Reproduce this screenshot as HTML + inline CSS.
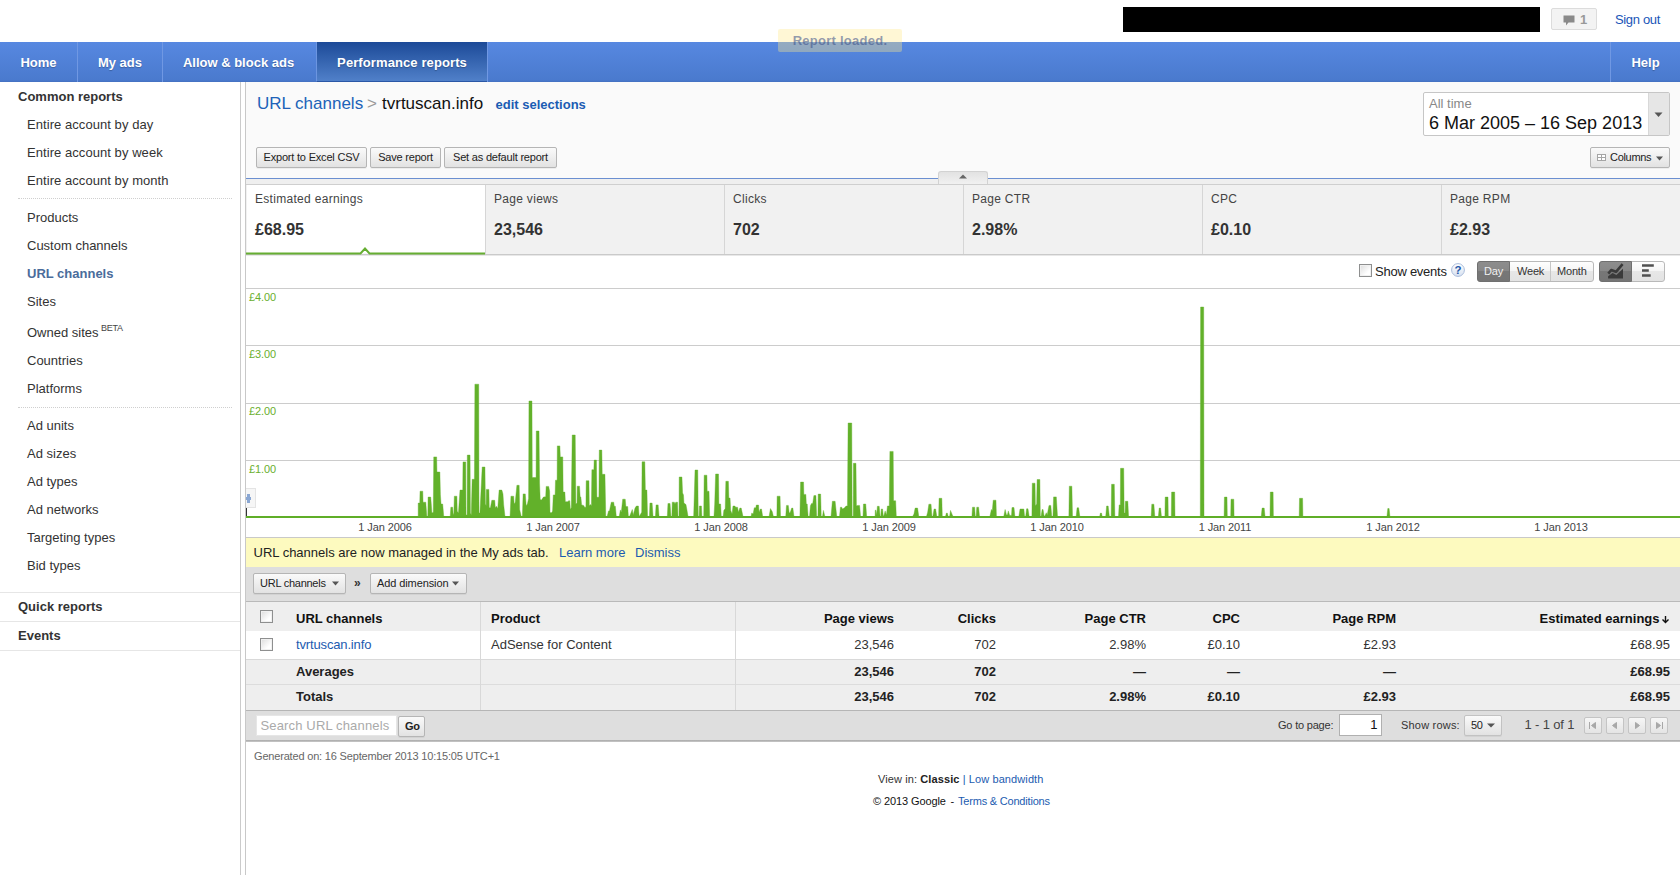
<!DOCTYPE html>
<html><head><meta charset="utf-8"><title>Performance reports</title>
<style>
*{box-sizing:border-box;margin:0;padding:0}
html,body{width:1680px;height:875px;overflow:hidden;background:#fff}
body{font-family:"Liberation Sans",Arial,sans-serif;font-size:13px;color:#333;position:relative}
a{color:#1c5bb0;text-decoration:none}
.a{position:absolute;white-space:nowrap}
/* baseline-positioned text: top = baseline - 0.905*fs (line-height normal ~1.149) */
#blackbar{left:1123px;top:7px;width:417px;height:25px;background:#000}
#msg{left:1551px;top:8px;width:46px;height:22px;background:#f3f3f3;border:1px solid #dcdcdc;border-radius:2px}
#nav{left:0;top:42px;width:1680px;height:40px;background:linear-gradient(#5788e1,#4a7ace 95%,#4470c0)}
.tab{position:absolute;top:0;height:40px;line-height:41px;color:#fff;font-weight:bold;font-size:13px;text-align:center;text-shadow:0 1px 1px rgba(0,0,0,.25)}
.vd{position:absolute;top:0;width:1px;height:40px;background:#7098e3}
#acttab{background:linear-gradient(#1c4a98,#5080c9);border-left:1px solid #6c95e0;border-bottom:1px solid #2a57a6;letter-spacing:.1px}
#toast{left:778px;top:29px;width:124px;height:23px;background:rgba(255,232,138,.36);border-radius:2px;color:rgba(55,75,135,.55);font-weight:bold;font-size:13px;letter-spacing:.25px;text-align:center;line-height:23px}
#sideb1{left:240px;top:82px;width:1px;height:793px;background:#cbcbcb}
#sideb2{left:245px;top:82px;width:1px;height:793px;background:#c8c8c8}
#sidegap{left:241px;top:82px;width:4px;height:793px;background:#fff}
.sh{left:18px;font-weight:bold;font-size:13px;color:#333;line-height:15px}
.si{left:27px;font-size:13px;color:#333;line-height:15px}
.sdot{left:18px;width:214px;height:0;border-top:1px dotted #cfcfcf}
.sline{left:0;width:240px;height:1px;background:#e6e6e6}
#hdr{left:246px;top:82px;width:1434px;height:96px;background:#fafafa}
.btn{height:21px;border:1px solid #b5b5b5;border-radius:2px;background:linear-gradient(#fafafa,#e2e2e2);font-size:11px;color:#222;line-height:19px;text-align:center;box-shadow:0 1px 0 rgba(0,0,0,.05)}
.mc{top:185px;height:69px;width:239px;background:#f1f1f1;border-left:1px solid #d4d4d4}
.ml{font-size:12px;color:#444;line-height:14px;letter-spacing:.3px}
.mv{font-size:16px;font-weight:bold;color:#333;line-height:18px}
.gl{left:246px;width:1434px;height:1px;background:#ccc}
.yl{left:249px;font-size:11px;color:#6aaf2e;line-height:13px;letter-spacing:-.1px}
.xl{font-size:11px;color:#444;line-height:13px;width:80px;text-align:center;letter-spacing:-.1px}
.th{font-size:13px;font-weight:bold;color:#111;line-height:15px}
.td{font-size:13px;color:#333;line-height:15px}
.r{text-align:right}
.cb{width:13px;height:13px;border:1px solid #8e8f8f;background:linear-gradient(135deg,#dcdcdc,#fff 70%);box-shadow:inset 0 0 0 1px #f0f0f0}
.pg{top:717px;width:18px;height:17px;border:1px solid #c4c4c4;border-radius:2px;background:linear-gradient(#f6f6f6,#e4e4e4)}
</style></head><body>
<div class="a" id="blackbar"></div>
<div class="a" id="msg"><svg class="a" style="left:11px;top:6px" width="12" height="11" viewBox="0 0 12 11"><path d="M0.5,0.5h11v7h-6l-2.5,3v-3h-2.5z" fill="#8a8a8a"/></svg></div>
<div class="a " style="left:1580px;top:12.2px;font-size:13px;line-height:15px;color:#999;font-weight:bold">1</div>
<a class="a " style="left:1615px;top:12.2px;font-size:13px;line-height:15px;color:#1a55b8;letter-spacing:-.35px">Sign out</a>
<div class="a" id="nav">
<div class="tab" style="left:0;width:77px">Home</div><div class="vd" style="left:77px"></div>
<div class="tab" style="left:78px;width:84px">My ads</div><div class="vd" style="left:162px"></div>
<div class="tab" style="left:162px;width:153px">Allow &amp; block ads</div>
<div class="tab" id="acttab" style="left:316px;width:171px">Performance reports</div>
<div class="vd" style="left:487px"></div>
<div class="vd" style="left:1610px"></div><div class="tab" style="left:1611px;width:69px">Help</div>
</div>
<div class="a" id="toast">Report loaded.</div>
<div class="a" id="sideb1"></div><div class="a" id="sidegap"></div><div class="a" id="sideb2"></div>
<div class="a sh" style="left:18px;top:89.2px;font-size:13px;line-height:15px;">Common reports</div>
<div class="a si" style="left:27px;top:117.2px;font-size:13px;line-height:15px;letter-spacing:.06px">Entire account by day</div>
<div class="a si" style="left:27px;top:145.2px;font-size:13px;line-height:15px;letter-spacing:.06px">Entire account by week</div>
<div class="a si" style="left:27px;top:173.2px;font-size:13px;line-height:15px;letter-spacing:.06px">Entire account by month</div>
<div class="a sdot" style="top:198px"></div>
<div class="a si" style="left:27px;top:210.2px;font-size:13px;line-height:15px;">Products</div>
<div class="a si" style="left:27px;top:238.2px;font-size:13px;line-height:15px;">Custom channels</div>
<div class="a si" style="left:27px;top:266.2px;font-size:13px;line-height:15px;font-weight:bold;color:#4a6c9b;letter-spacing:0">URL channels</div>
<div class="a si" style="left:27px;top:294.2px;font-size:13px;line-height:15px;">Sites</div>
<div class="a si" style="left:27px;top:325.2px;font-size:13px;line-height:15px;">Owned sites</div>
<div class="a " style="left:101px;top:322.5px;font-size:9px;line-height:11px;color:#444;letter-spacing:-.3px">BETA</div>
<div class="a si" style="left:27px;top:353.2px;font-size:13px;line-height:15px;">Countries</div>
<div class="a si" style="left:27px;top:381.2px;font-size:13px;line-height:15px;">Platforms</div>
<div class="a sdot" style="top:407px"></div>
<div class="a si" style="left:27px;top:418.2px;font-size:13px;line-height:15px;">Ad units</div>
<div class="a si" style="left:27px;top:446.2px;font-size:13px;line-height:15px;">Ad sizes</div>
<div class="a si" style="left:27px;top:474.2px;font-size:13px;line-height:15px;">Ad types</div>
<div class="a si" style="left:27px;top:502.2px;font-size:13px;line-height:15px;">Ad networks</div>
<div class="a si" style="left:27px;top:530.2px;font-size:13px;line-height:15px;">Targeting types</div>
<div class="a si" style="left:27px;top:558.2px;font-size:13px;line-height:15px;">Bid types</div>
<div class="a sline" style="top:592px"></div>
<div class="a sh" style="left:18px;top:599.2px;font-size:13px;line-height:15px;">Quick reports</div>
<div class="a sline" style="top:621px"></div>
<div class="a sh" style="left:18px;top:628.2px;font-size:13px;line-height:15px;">Events</div>
<div class="a sline" style="top:650px"></div>
<div class="a" id="hdr"></div>
<a class="a " style="left:257px;top:93.9px;font-size:17px;line-height:19px;color:#2062b8">URL channels</a>
<div class="a " style="left:367px;top:93.9px;font-size:17px;line-height:19px;color:#999">&gt;</div>
<div class="a " style="left:382px;top:93.9px;font-size:17px;line-height:19px;color:#111">tvrtuscan.info</div>
<a class="a " style="left:495.5px;top:97.2px;font-size:13px;line-height:15px;color:#1a5cb3;font-weight:bold">edit selections</a>
<div class="a btn" style="left:256px;top:147px;width:111px;letter-spacing:-.2px">Export to Excel CSV</div>
<div class="a btn" style="left:370px;top:147px;width:71px;letter-spacing:-.2px">Save report</div>
<div class="a btn" style="left:444px;top:147px;width:113px;letter-spacing:-.2px">Set as default report</div>
<div class="a" style="left:1423px;top:92px;width:247px;height:44px;background:#fff;border:1px solid #c6c6c6;border-radius:2px"></div>
<div class="a" style="left:1648px;top:93px;width:21px;height:42px;background:#e6e6e6;border-left:1px solid #d8d8d8"></div>
<svg class="a" style="left:1654px;top:112px" width="9" height="6"><path d="M0.5,0.5h8l-4,4.5z" fill="#555"/></svg>
<div class="a " style="left:1429px;top:96.2px;font-size:13px;line-height:15px;color:#888">All time</div>
<div class="a " style="left:1429px;top:113.1px;font-size:18px;line-height:20px;color:#111">6 Mar 2005 – 16 Sep 2013</div>
<div class="a btn" style="left:1590px;top:147px;width:80px"></div>
<svg class="a" style="left:1597px;top:154px" width="10" height="7"><rect x=".5" y=".5" width="8" height="6" fill="#fff" stroke="#a5a5a5"/><path d="M.5,3.5h8M4.5,.5v6" stroke="#a5a5a5"/></svg>
<div class="a " style="left:1610px;top:150.9px;font-size:11px;line-height:13px;color:#222;letter-spacing:-.3px">Columns</div>
<svg class="a" style="left:1656px;top:156px" width="8" height="5"><path d="M0,0.5h7l-3.5,4z" fill="#555"/></svg>
<div class="a" style="left:246px;top:178px;width:1434px;height:1px;background:#6b8fd1"></div>
<div class="a" style="left:246px;top:179px;width:1434px;height:5px;background:#efefef"></div>
<div class="a" style="left:246px;top:184px;width:1434px;height:1px;background:#cfcfcf"></div>
<div class="a" style="left:938px;top:171px;width:50px;height:13px;background:linear-gradient(#e2e2e2,#f1f1f1);border:1px solid #d2d2d2;border-bottom:0;border-radius:3px 3px 0 0"></div>
<svg class="a" style="left:959px;top:174px" width="9" height="5"><path d="M0,4.5h8l-4,-4z" fill="#666"/></svg>
<div class="a" style="left:246px;top:185px;width:1434px;height:69px;background:#f1f1f1"></div>
<div class="a" style="left:246px;top:254px;width:1434px;height:1px;background:#cacaca"></div>
<div class="a" style="left:246px;top:255px;width:1434px;height:1px;background:#e8e8e8"></div>
<div class="a" style="left:247px;top:185px;width:238px;height:68px;background:#fff"></div>
<div class="a" style="left:485px;top:185px;width:1px;height:69px;background:#d6d6d6"></div>
<div class="a" style="left:724px;top:185px;width:1px;height:69px;background:#d6d6d6"></div>
<div class="a" style="left:963px;top:185px;width:1px;height:69px;background:#d6d6d6"></div>
<div class="a" style="left:1202px;top:185px;width:1px;height:69px;background:#d6d6d6"></div>
<div class="a" style="left:1441px;top:185px;width:1px;height:69px;background:#d6d6d6"></div>
<div class="a ml" style="left:255px;top:192.0px;font-size:12px;line-height:14px;">Estimated earnings</div>
<div class="a mv" style="left:255px;top:220.7px;font-size:16px;line-height:18px;">£68.95</div>
<div class="a ml" style="left:494px;top:192.0px;font-size:12px;line-height:14px;">Page views</div>
<div class="a mv" style="left:494px;top:220.7px;font-size:16px;line-height:18px;">23,546</div>
<div class="a ml" style="left:733px;top:192.0px;font-size:12px;line-height:14px;">Clicks</div>
<div class="a mv" style="left:733px;top:220.7px;font-size:16px;line-height:18px;">702</div>
<div class="a ml" style="left:972px;top:192.0px;font-size:12px;line-height:14px;">Page CTR</div>
<div class="a mv" style="left:972px;top:220.7px;font-size:16px;line-height:18px;">2.98%</div>
<div class="a ml" style="left:1211px;top:192.0px;font-size:12px;line-height:14px;">CPC</div>
<div class="a mv" style="left:1211px;top:220.7px;font-size:16px;line-height:18px;">£0.10</div>
<div class="a ml" style="left:1450px;top:192.0px;font-size:12px;line-height:14px;">Page RPM</div>
<div class="a mv" style="left:1450px;top:220.7px;font-size:16px;line-height:18px;">£2.93</div>
<svg class="a" style="left:246px;top:245px" width="240" height="11"><path d="M0,8.5H114.5L119,3.5L123.5,8.5H239" fill="#fff" stroke="#66ae32" stroke-width="2"/></svg>
<div class="a cb" style="left:1359px;top:264px;width:13px;height:13px"></div>
<div class="a " style="left:1375px;top:264.2px;font-size:13px;line-height:15px;color:#222;letter-spacing:-.25px">Show events</div>
<svg class="a" style="left:1450px;top:262px" width="16" height="16"><defs><linearGradient id="qg" x1="0" y1="0" x2="0" y2="1"><stop offset="0" stop-color="#fff"/><stop offset="1" stop-color="#d6e0f0"/></linearGradient></defs><circle cx="8" cy="8" r="6.4" fill="url(#qg)" stroke="#a9bcdb"/><text x="8" y="12" font-family="Liberation Sans" font-size="11.5" font-weight="bold" fill="#2457a8" text-anchor="middle">?</text></svg>
<div class="a" style="left:1477px;top:261px;width:117px;height:21px;border:1px solid #b9b9b9;border-radius:3px;background:linear-gradient(#fefefe,#f4f4f4 50%,#e7e7e7 50%,#e3e3e3)"></div>
<div class="a" style="left:1477px;top:261px;width:33px;height:21px;border:1px solid #707070;border-radius:3px 0 0 3px;background:linear-gradient(#8d8d8d,#878787 50%,#777 50%,#757575)"></div>
<div class="a" style="left:1550px;top:262px;width:1px;height:19px;background:#c6c6c6"></div>
<div class="a " style="left:1484px;top:264.9px;font-size:11px;line-height:13px;color:#f0f0f0;letter-spacing:-.2px">Day</div>
<div class="a " style="left:1517px;top:264.9px;font-size:11px;line-height:13px;color:#333;letter-spacing:-.2px">Week</div>
<div class="a " style="left:1557px;top:264.9px;font-size:11px;line-height:13px;color:#333;letter-spacing:-.2px">Month</div>
<div class="a" style="left:1599px;top:261px;width:66px;height:21px;border:1px solid #b9b9b9;border-radius:3px;background:linear-gradient(#fefefe,#f4f4f4 50%,#e7e7e7 50%,#e3e3e3)"></div>
<div class="a" style="left:1599px;top:261px;width:33px;height:21px;border:1px solid #707070;border-radius:3px 0 0 3px;background:linear-gradient(#8d8d8d,#878787 50%,#777 50%,#757575)"></div>
<svg class="a" style="left:1607px;top:262px" width="17" height="17"><path d="M1.1,16.6V14.3L5.6,11L9.4,12.9L16,6.8V16.6z" fill="#3a3a3a"/><path d="M1.3,11.6L4.2,8L9,9.8L15.6,2.2" stroke="#3a3a3a" stroke-width="2.6" fill="none" stroke-linejoin="round"/></svg>
<svg class="a" style="left:1642px;top:264px" width="14" height="14"><path d="M0,0.3h11.8v2.5h-11.8zM0,5.3h6.8v2.5h-6.8zM0,10.2h8.7v2.5h-8.7z" fill="#505050"/></svg>
<div class="a gl" style="top:288px"></div>
<div class="a gl" style="top:345px"></div>
<div class="a gl" style="top:403px"></div>
<div class="a gl" style="top:460px"></div>
<div class="a yl" style="left:249px;top:290.9px;font-size:11px;line-height:13px;">£4.00</div>
<div class="a yl" style="left:249px;top:347.9px;font-size:11px;line-height:13px;">£3.00</div>
<div class="a yl" style="left:249px;top:404.9px;font-size:11px;line-height:13px;">£2.00</div>
<div class="a yl" style="left:249px;top:463.2px;font-size:11px;line-height:13px;">£1.00</div>
<div class="a" style="left:246px;top:488px;width:10px;height:20px;background:#f6f6f6;border:1px solid #e4e4e4;border-left:0"></div>
<div class="a" style="left:246px;top:497px;width:5px;height:3px;background:#8aa7d3"></div><div class="a" style="left:247px;top:494px;width:3px;height:9px;background:#8aa7d3"></div>
<div class="a" style="left:246px;top:508px;width:1px;height:9px;background:#333"></div>
<svg class="a" style="left:0;top:0" width="1680" height="540" viewBox="0 0 1680 540"><path d="M246,517L418.2,517 418.2,503.1 419.75,503.1 420.03,491.2 422.77,491.2 423.05,502.2 425.79,502.2 426.89,517 427.8,517 428.08,497.1 430.73,497.1 431.28,504 431.92,513.1 433.29,512.2 433.74,456.9 436.67,456.9 436.94,472 439.87,472 440.42,494.9 441.06,504 442.7,504 443.8,517 450.2,517 450.84,507.2 452.67,507.2 453.22,515 453.86,513.1 454.32,496.2 456.88,496.2 457.24,511.3 458.43,513.1 459.99,490.1 462.73,490.1 463,461.9 465.75,461.9 466.02,515 467.12,515 467.3,455.1 470.04,455.1 470.41,513.1 471.23,515 472.15,479.3 474.43,479.3 474.89,384.2 478.73,384.2 479,513.1 479.92,513.1 482.2,467 484.95,467 485.4,504 486.14,505.8 486.32,489.4 488.88,489.4 489.24,507.7 490.43,507.7 491.8,500.3 494.73,500.3 495.28,507.7 496.38,506.3 497.75,508.6 499.12,490.1 501.86,490.1 502.96,493.9 503.69,504.9 505.06,517 510.03,517 510.94,496.2 513.69,496.2 514.14,504 515.24,502.2 516.89,485.3 519.17,485.3 519.63,509.5 521.28,516.6 522.37,516.6 523.1,493.9 525.3,493.9 526.21,505.8 527.4,504 528.59,498.5 528.96,401 531.97,401 532.25,477.5 536.09,477.5 536.27,431 539.01,431 539.56,483 540.2,499.4 541.57,499.9 543.4,497.1 545.69,496.7 546.15,486.4 548.71,486.4 549.62,491.2 549.99,512.2 551.17,513.1 552.55,511.3 553.28,494.9 555.11,494.9 555.47,480.2 557.12,480.2 557.3,445.9 559.86,445.9 560.32,456.9 562.79,456.9 563.15,492.1 564.89,492.1 565.35,501.7 568.09,501.7 568.55,500.8 569.74,500.8 570.38,509.5 571.29,507.7 572.2,435 575.22,435 575.86,504 577.05,503.1 577.23,486.2 579.52,486.2 580.16,496.7 580.89,497.1 581.62,504.9 583.63,505.4 584.55,507.2 585.92,507.2 586.19,480.7 588.94,480.7 589.3,505.8 590.49,504.5 591.41,505.8 591.86,469.7 593.87,469.7 594.15,460.1 596.43,460.1 596.89,496.7 597.99,497.6 598.91,496.7 599.28,450.1 601.84,450.1 602.21,474.3 604.95,474.3 605.77,516.6 607.14,516.6 608.51,510.9 609.43,510.9 611.26,502.2 613.73,502.2 614.28,506.3 615.37,506.3 616.29,516.6 619.21,516.6 620.4,509.9 621.32,512.2 622.69,499.2 625.25,499.2 625.89,506.6 627.72,506.6 628.36,516.6 629.54,516.6 632.29,509.5 633.2,515 635.03,508.1 636.4,506 638.41,506 639.15,516.6 640.06,515 641.71,512.2 642.07,461.8 644.81,461.8 645.36,490.1 646.92,490.1 647.56,516.6 649.39,516.6 649.93,503.1 652.13,503.1 653.04,516.6 655.42,516.6 656.06,504.9 658.16,504.9 659.08,516.6 667.31,516.6 667.95,503.5 670.05,503.5 670.96,516.6 671.88,516.6 672.24,502.2 674.35,502.2 674.99,504 675.72,502.2 677.55,502.2 678,516.6 679.01,516.6 679.19,477 681.94,477 682.58,493 683.49,494.9 683.95,503.1 685.96,504.5 686.87,509.5 688.06,516.6 693.66,516.6 695.03,470 697.77,470 698.23,516.6 699.14,516.6 699.42,506 701.43,506 701.89,516.6 703.72,516.6 704.17,475.2 706.92,475.2 707.19,491.2 709.02,491.2 709.66,516.6 713.96,516.6 714.69,504 715.6,474 718.53,474 718.89,504 720.63,504 721.27,516.6 723.1,516.6 723.83,510.4 725.2,508.6 725.84,481.3 728.4,481.3 728.86,498.1 730.05,498.1 730.69,510.4 732.06,514.1 732.97,506 734.8,506 735.72,507.2 737.55,507.2 738.46,512.2 739.83,508.1 741.2,508.1 743.03,516.6 751.08,516.6 751.72,513.1 753.09,514.1 754.28,507.8 755.83,507.8 756.29,505.1 758.58,505.1 759.03,512.2 760.4,509 761.5,509 762.69,516.6 769.09,516.6 770.46,508.6 772.29,511.8 773.39,516.6 776.86,516.6 777.14,496.2 780.06,496.2 780.52,516.6 785.74,516.6 786.47,505.4 788.3,505.4 789.22,513.1 790.31,512.2 791.69,508.1 792.87,508.1 793.97,516.6 799.92,516.6 800.56,482.1 803.57,482.1 803.85,494.4 805.86,494.4 806.32,504 807.23,504 808.14,516.6 809.52,516.6 810.43,505.8 811.53,503.5 812.72,503.5 813.9,495.6 815.92,495.6 816.65,516.6 817.93,516.6 818.2,494.1 820.67,494.1 821.22,516.6 822.5,516.6 823.41,510.4 824.88,516.6 831,516.6 832.37,501.3 835.12,501.3 836.76,516.6 839.51,516.6 840.42,507.2 841.7,507.2 842.43,509 844.26,508.1 846.09,506 847.46,506 848.1,423 851.76,423 852.12,516.6 853.22,516.6 853.4,463.3 855.96,463.3 856.42,505.8 857.98,505.4 859.62,505.4 860.54,516.6 863,516.6 863.46,504 865.75,504 866.66,516.6 875.09,516.6 875.27,510.2 876,510.2 876.73,515 877.37,506.3 879.2,506.3 880.11,516.6 880.75,516.6 881.3,509 882.58,509 883.31,516.6 884.05,515 885.14,510.9 886.51,515 887.43,506 889.26,506 889.9,451.4 893.19,451.4 893.56,500.8 895.66,500.8 896.3,516.6 912.57,516.6 913.95,514.1 915.13,508.1 917.6,508.1 918.79,516.6 926.47,516.6 927.66,512.2 928.85,504.2 931.04,504.2 931.96,516.6 932.87,516.6 934.06,509 935.62,509 936.8,516.6 938.63,516.6 939.09,498.3 941.83,498.3 942.29,516.6 945.49,516.6 946.4,513.1 947.32,513.1 948.23,516.6 949.6,516.6 950.52,510.4 952.35,515 953.26,516.6 971.93,516.6 972.47,507.2 974.67,507.2 975.22,516.6 976.13,516.6 976.77,507.2 978.6,507.2 979.51,516.6 989.85,516.6 991.4,509.5 992.32,510.4 993.23,500.2 995.97,500.2 996.43,516.6 1003.74,516.6 1005.12,509.5 1006.49,515 1007.4,515 1008.32,510.9 1009.69,515.4 1011.52,515.4 1011.97,507.5 1013.99,507.5 1014.9,516.6 1018.83,516.6 1020.02,509 1023.86,509 1024.59,516.6 1025.69,516.6 1026.6,508.8 1027.97,508.8 1029.16,516.6 1031.91,516.6 1032.27,483.2 1035.02,483.2 1035.38,505.8 1036.66,504 1037.12,479.5 1039.86,479.5 1040.32,516.6 1041.05,516.6 1042.15,509.5 1043.06,509.5 1044.16,516.6 1045.35,515 1046.26,512.7 1047.18,515 1049,505.4 1050.83,505.4 1051.75,516.6 1052.94,516.6 1053.58,496.9 1056.32,496.9 1057.51,516.6 1068.86,516.6 1069.31,486.2 1071.87,486.2 1072.51,516.6 1076.17,516.6 1077.09,507.8 1078.64,507.8 1079.83,516.6 1099.67,516.6 1100.4,513.1 1101.5,513.1 1102.23,516.6 1105.71,516.6 1106.62,506 1108.17,506 1109.36,516.6 1111.19,516.6 1111.56,484.3 1114.3,484.3 1114.85,516.6 1118.51,516.6 1119.15,504.9 1120.33,504.9 1120.52,468.3 1123.72,468.3 1124.18,513.1 1125.09,513.1 1125.36,501.3 1127.83,501.3 1128.56,516.6 1151.15,516.6 1151.79,504.2 1153.89,504.2 1154.81,516.6 1158.3,517 1159.2,508.1 1160.6,508.1 1161.5,517 1164.9,517 1165.2,497.1 1168,497.1 1168.3,517 1171.3,517 1171.6,492.1 1174.7,492.1 1175,517 1200.3,517 1200.6,307 1203.7,307 1204,517 1224.1,517 1224.4,497.1 1227,497.1 1227.3,517 1230.7,517 1231,499.2 1233.8,499.2 1234.1,517 1261.2,517 1262.1,508.1 1264.2,508.1 1265.1,517 1270,517 1270.3,492.1 1273.1,492.1 1273.4,517 1299.2,517 1299.5,498.3 1302.6,498.3 1302.9,517 1386.9,517 1387.8,508.5 1389.1,508.5 1390,517 L1680,517Z" fill="#62b12a" stroke="#62b12a" stroke-width="0.4" stroke-linejoin="miter"/><rect x="246" y="516" width="1434" height="2" fill="#5fae28"/></svg>
<div class="a xl" style="left:345px;top:520.9px;font-size:11px;line-height:13px;">1 Jan 2006</div>
<div class="a xl" style="left:513px;top:520.9px;font-size:11px;line-height:13px;">1 Jan 2007</div>
<div class="a xl" style="left:681px;top:520.9px;font-size:11px;line-height:13px;">1 Jan 2008</div>
<div class="a xl" style="left:849px;top:520.9px;font-size:11px;line-height:13px;">1 Jan 2009</div>
<div class="a xl" style="left:1017px;top:520.9px;font-size:11px;line-height:13px;">1 Jan 2010</div>
<div class="a xl" style="left:1185px;top:520.9px;font-size:11px;line-height:13px;">1 Jan 2011</div>
<div class="a xl" style="left:1353px;top:520.9px;font-size:11px;line-height:13px;">1 Jan 2012</div>
<div class="a xl" style="left:1521px;top:520.9px;font-size:11px;line-height:13px;">1 Jan 2013</div>
<div class="a" style="left:246px;top:537px;width:1434px;height:1px;background:#c9c9c9"></div>
<div class="a" style="left:246px;top:538px;width:1434px;height:29px;background:#fdfabf"></div>
<div class="a " style="left:253.5px;top:545.2px;font-size:13px;line-height:15px;color:#222">URL channels are now managed in the My ads tab.</div>
<a class="a " style="left:559px;top:545.2px;font-size:13px;line-height:15px;color:#1c5bb0">Learn more</a>
<a class="a " style="left:635px;top:545.2px;font-size:13px;line-height:15px;color:#1c5bb0">Dismiss</a>
<div class="a" style="left:246px;top:567px;width:1434px;height:34px;background:#dedede"></div>
<div class="a btn" style="left:253px;top:573px;width:93px;height:21px"></div>
<div class="a " style="left:260px;top:576.9px;font-size:11px;line-height:13px;color:#222;letter-spacing:-.25px">URL channels</div>
<svg class="a" style="left:332px;top:581px" width="8" height="5"><path d="M0,0.5h7l-3.5,4z" fill="#555"/></svg>
<div class="a " style="left:354px;top:576.0px;font-size:12px;line-height:14px;color:#333;font-weight:bold">»</div>
<div class="a btn" style="left:370px;top:573px;width:97px;height:21px"></div>
<div class="a " style="left:377px;top:576.9px;font-size:11px;line-height:13px;color:#222;letter-spacing:-.1px">Add dimension</div>
<svg class="a" style="left:452px;top:581px" width="8" height="5"><path d="M0,0.5h7l-3.5,4z" fill="#555"/></svg>
<div class="a" style="left:246px;top:601px;width:1434px;height:1px;background:#b9b9b9"></div>
<div class="a" style="left:246px;top:602px;width:1434px;height:29px;background:#eee"></div>
<div class="a" style="left:246px;top:631px;width:1434px;height:28px;background:#fff"></div>
<div class="a" style="left:246px;top:659px;width:1434px;height:51px;background:#eee"></div>
<div class="a" style="left:246px;top:659px;width:1434px;height:1px;background:#d9d9d9"></div>
<div class="a" style="left:246px;top:684px;width:1434px;height:1px;background:#dcdcdc"></div>
<div class="a" style="left:246px;top:710px;width:1434px;height:1px;background:#b5b5b5"></div>
<div class="a" style="left:480px;top:602px;width:1px;height:108px;background:#d8d8d8"></div>
<div class="a" style="left:735px;top:602px;width:1px;height:108px;background:#d8d8d8"></div>
<div class="a cb" style="left:260px;top:610px"></div>
<div class="a cb" style="left:260px;top:638px"></div>
<div class="a th" style="left:296px;top:610.8px;font-size:13px;line-height:15px;">URL channels</div>
<div class="a th" style="left:491px;top:610.8px;font-size:13px;line-height:15px;">Product</div>
<div class="a th" style="right:786px;top:610.8px;font-size:13px;line-height:15px;">Page views</div>
<div class="a th" style="right:684px;top:610.8px;font-size:13px;line-height:15px;">Clicks</div>
<div class="a th" style="right:534px;top:610.8px;font-size:13px;line-height:15px;">Page CTR</div>
<div class="a th" style="right:440px;top:610.8px;font-size:13px;line-height:15px;">CPC</div>
<div class="a th" style="right:284px;top:610.8px;font-size:13px;line-height:15px;">Page RPM</div>
<div class="a th" style="right:20.5px;top:610.8px;font-size:13px;line-height:15px;">Estimated earnings</div>
<svg class="a" style="left:1661px;top:615px" width="9" height="9"><path d="M4.5,1v6.5M1.5,4.6L4.5,7.6L7.5,4.6" stroke="#111" stroke-width="1.4" fill="none"/></svg>
<a class="a td" style="left:296px;top:637.2px;font-size:13px;line-height:15px;color:#1c5bb0;letter-spacing:-.15px">tvrtuscan.info</a>
<div class="a td" style="left:491px;top:637.2px;font-size:13px;line-height:15px;">AdSense for Content</div>
<div class="a td" style="right:786px;top:637.2px;font-size:13px;line-height:15px;">23,546</div>
<div class="a td" style="right:684px;top:637.2px;font-size:13px;line-height:15px;">702</div>
<div class="a td" style="right:534px;top:637.2px;font-size:13px;line-height:15px;">2.98%</div>
<div class="a td" style="right:440px;top:637.2px;font-size:13px;line-height:15px;">£0.10</div>
<div class="a td" style="right:284px;top:637.2px;font-size:13px;line-height:15px;">£2.93</div>
<div class="a td" style="right:10px;top:637.2px;font-size:13px;line-height:15px;">£68.95</div>
<div class="a th" style="left:296px;top:664.2px;font-size:13px;line-height:15px;color:#222">Averages</div>
<div class="a th" style="right:786px;top:664.2px;font-size:13px;line-height:15px;color:#222">23,546</div>
<div class="a th" style="right:684px;top:664.2px;font-size:13px;line-height:15px;color:#222">702</div>
<div class="a th" style="right:534px;top:664.2px;font-size:13px;line-height:15px;color:#222">—</div>
<div class="a th" style="right:440px;top:664.2px;font-size:13px;line-height:15px;color:#222">—</div>
<div class="a th" style="right:284px;top:664.2px;font-size:13px;line-height:15px;color:#222">—</div>
<div class="a th" style="right:10px;top:664.2px;font-size:13px;line-height:15px;color:#222">£68.95</div>
<div class="a th" style="left:296px;top:689.2px;font-size:13px;line-height:15px;color:#222">Totals</div>
<div class="a th" style="right:786px;top:689.2px;font-size:13px;line-height:15px;color:#222">23,546</div>
<div class="a th" style="right:684px;top:689.2px;font-size:13px;line-height:15px;color:#222">702</div>
<div class="a th" style="right:534px;top:689.2px;font-size:13px;line-height:15px;color:#222">2.98%</div>
<div class="a th" style="right:440px;top:689.2px;font-size:13px;line-height:15px;color:#222">£0.10</div>
<div class="a th" style="right:284px;top:689.2px;font-size:13px;line-height:15px;color:#222">£2.93</div>
<div class="a th" style="right:10px;top:689.2px;font-size:13px;line-height:15px;color:#222">£68.95</div>
<div class="a" style="left:246px;top:711px;width:1434px;height:29px;background:#dedede"></div>
<div class="a" style="left:246px;top:740px;width:1434px;height:2px;background:linear-gradient(#a8a8a8,#c9c9c9)"></div>
<div class="a" style="left:256px;top:715px;width:141px;height:21px;background:#fff;border:1px solid #e6e6e6"></div>
<div class="a " style="left:260.5px;top:718.2px;font-size:13px;line-height:15px;color:#aaa;letter-spacing:.15px">Search URL channels</div>
<div class="a btn" style="left:398px;top:716px;width:27px;height:21px"></div>
<div class="a " style="left:405px;top:719.9px;font-size:11px;line-height:13px;color:#222;font-weight:bold;letter-spacing:-.4px">Go</div>
<div class="a " style="left:1278px;top:718.9px;font-size:11px;line-height:13px;color:#333;letter-spacing:-.2px">Go to page:</div>
<div class="a" style="left:1339px;top:714px;width:43px;height:22px;background:#fff;border:1px solid #b0b0b0"></div>
<div class="a " style="right:302.5px;top:717.2px;font-size:13px;line-height:15px;color:#111">1</div>
<div class="a " style="left:1401px;top:718.9px;font-size:11px;line-height:13px;color:#333;letter-spacing:.2px">Show rows:</div>
<div class="a btn" style="left:1464px;top:715px;width:38px;height:21px;border-color:#c2c2c2"></div>
<div class="a " style="left:1471px;top:718.9px;font-size:11px;line-height:13px;color:#222;letter-spacing:-.4px">50</div>
<svg class="a" style="left:1487px;top:723px" width="8" height="5"><path d="M0,0.5h8l-4,4z" fill="#555"/></svg>
<div class="a " style="left:1524.5px;top:717.2px;font-size:13px;line-height:15px;color:#444;letter-spacing:-.15px">1 - 1 of 1</div>
<div class="a pg" style="left:1584px"><svg class="a" style="left:-1px;top:-1px" width="18" height="17"><path d="M5.5,5v7M11.5,5.5v6l-4,-3z" fill="#a8a8a8" stroke="#a8a8a8" stroke-width="1"/></svg></div>
<div class="a pg" style="left:1606px"><svg class="a" style="left:-1px;top:-1px" width="18" height="17"><path d="M10.5,5.5v6l-4,-3z" fill="#a8a8a8" stroke="#a8a8a8" stroke-width="1"/></svg></div>
<div class="a pg" style="left:1628px"><svg class="a" style="left:-1px;top:-1px" width="18" height="17"><path d="M7.5,5.5v6l4,-3z" fill="#a8a8a8" stroke="#a8a8a8" stroke-width="1"/></svg></div>
<div class="a pg" style="left:1650px"><svg class="a" style="left:-1px;top:-1px" width="18" height="17"><path d="M12.5,5v7M6.5,5.5v6l4,-3z" fill="#a8a8a8" stroke="#a8a8a8" stroke-width="1"/></svg></div>
<div class="a " style="left:254px;top:749.9px;font-size:11px;line-height:13px;color:#666;letter-spacing:-.18px">Generated on: 16 September 2013 10:15:05 UTC+1</div>
<div class="a " style="left:878px;top:772.9px;font-size:11px;line-height:13px;color:#333;letter-spacing:.1px">View in: <b style="color:#222">Classic</b> <span style="color:#1c5bb0">|</span> <a>Low bandwidth</a></div>
<div class="a " style="left:873px;top:794.9px;font-size:11px;line-height:13px;color:#111;letter-spacing:-.1px">© 2013 Google</div>
<div class="a " style="left:950.5px;top:794.9px;font-size:11px;line-height:13px;color:#111">-</div>
<a class="a " style="left:958px;top:794.9px;font-size:11px;line-height:13px;letter-spacing:-.2px">Terms &amp; Conditions</a>
</body></html>
